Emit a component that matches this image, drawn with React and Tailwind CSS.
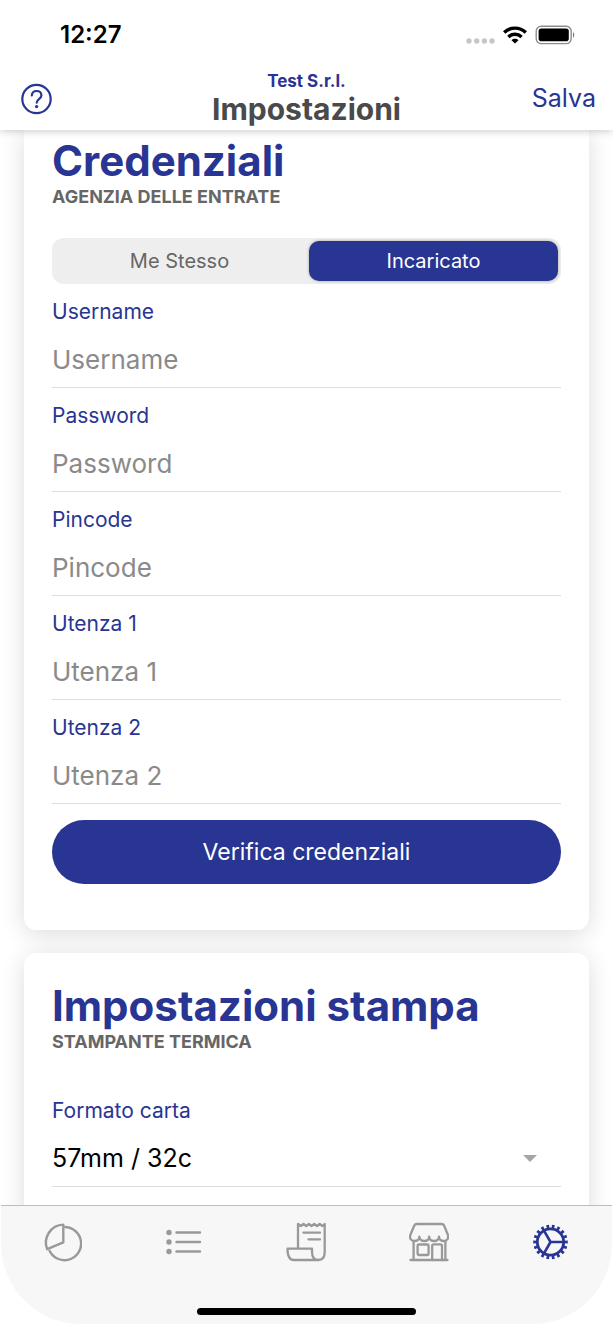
import React, { useState } from 'react';

const PieIcon = () => (
  <svg className="w-10 h-10" viewBox="0 0 40 40" fill="none" stroke="currentColor" strokeWidth={2.4} strokeLinejoin="round">
    <path d="M21.3 20.3V2.6A18 18 0 0 0 5.2 27.2z" />
    <path d="M22.3 5A16.6 16.6 0 1 1 7.2 28" />
  </svg>
);

const ListIcon = () => (
  <svg className="w-10 h-10" viewBox="0 0 40 40" fill="none" stroke="currentColor" strokeWidth={2.4} strokeLinecap="round">
    <path d="M12.5 10.5H36M12.500 20H36M12.500 29.500H36" />
    <g fill="currentColor" stroke="none">
      <circle cx="5" cy="10.500" r="2.700" />
      <circle cx="5" cy="20" r="2.700" />
      <circle cx="5" cy="29.500" r="2.700" />
    </g>
  </svg>
);

const ReceiptIcon = () => (
  <svg className="w-10 h-10" viewBox="0 0 40 40" fill="none" stroke="currentColor" strokeWidth={2.3} strokeLinecap="round" strokeLinejoin="round">
    <path d="M12 26V2l2.800 2 2.700-2 2.700 2 2.700-2 2.700 2 2.700-2 2.700 2 2.700-2 2.700 2 2.300-2V30c0 5-2.500 8-6.500 8" />
    <path d="M1.500 26.700H26V29.500c0 5.500 2.400 8.500 6.400 8.500H7.800C3.300 38 1.500 34.500 1.500 26.700z" />
    <path d="M17.500 10.700H34M22.500 17.400H34" />
  </svg>
);

const StoreIcon = () => (
  <svg className="w-10 h-10" viewBox="0 0 40 40" fill="none" stroke="currentColor" strokeWidth={2.3} strokeLinecap="round" strokeLinejoin="round">
    <path d="M8 2H32.500C34 2 34.700 2.600 35.200 3.700L39 13c.8 3.600-1.200 6-4.200 6-2.700 0-4.800-1.800-4.800-4.400 0 2.600-2 4.400-4.900 4.400s-4.900-1.800-4.900-4.400c0 2.600-2 4.400-4.900 4.400s-4.900-1.800-4.900-4.400C10.400 17.200 8.300 19 5.500 19 2.300 19 .3 16.600 1.300 13L5.200 3.700C5.700 2.600 6.500 2 8 2z" />
    <path d="M4.600 19V38M36.400 19V38M1.500 38H38.500" />
    <rect x="8.600" y="22.500" width="11" height="10.500" rx="1.200" />
    <path d="M23.200 38V24c0-1 .6-1.600 1.600-1.600h6.600c1 0 1.600.6 1.600 1.600V38" />
  </svg>
);

const GearIcon = () => (
  <svg className="w-10 h-10" viewBox="0 0 40 40" fill="none" stroke="currentColor">
    <circle cx="19.500" cy="20" r="13.200" strokeWidth={2.800} />
    <circle cx="19.500" cy="20" r="15.500" strokeWidth={3.600} pathLength="180" strokeDasharray="5 5" strokeDashoffset="2.500" />
    <path d="M19.500 20H32.500M19.500 20L13 8.700M19.500 20L13 31.300" strokeWidth={2.600} />
  </svg>
);

const tabs = [
  { name: 'Statistiche', Icon: PieIcon },
  { name: 'Elenco', Icon: ListIcon },
  { name: 'Scontrini', Icon: ReceiptIcon },
  { name: 'Negozio', Icon: StoreIcon },
  { name: 'Impostazioni', Icon: GearIcon },
];

const fields = [
  { id: 'username', label: 'Username', type: 'text' },
  { id: 'password', label: 'Password', type: 'password' },
  { id: 'pincode', label: 'Pincode', type: 'text' },
  { id: 'utenza1', label: 'Utenza 1', type: 'text' },
  { id: 'utenza2', label: 'Utenza 2', type: 'text' },
];

const StatusBar = () => (
  <div className="h-[70px] pl-[60px] pr-[38px] flex items-center justify-between text-black">
    <span className="text-2xl font-semibold">12:27</span>
    <div className="flex items-center gap-2">
      <svg className="w-[30px] h-5" viewBox="0 0 30 20" fill="#c6c6c6">
        <circle cx="4" cy="16" r="2.700" />
        <circle cx="11.700" cy="16" r="2.700" />
        <circle cx="19.400" cy="16" r="2.700" />
        <circle cx="27" cy="16" r="2.700" />
      </svg>
      <svg className="w-6 h-5" viewBox="0 0 24 20" fill="none" stroke="currentColor" strokeWidth={3.4}>
        <path d="M1.200 7.500C7.200 1.600 16.800 1.600 22.800 7.500" />
        <path d="M5.400 12C9.200 8.400 14.800 8.400 18.600 12" />
        <path d="M12 18.600L8.500 15.200C10.500 13.300 13.500 13.300 15.500 15.200z" fill="currentColor" stroke="none" />
      </svg>
      <svg className="w-10 h-5" viewBox="0 0 40 20">
        <rect x="1.200" y="1.200" width="35" height="17.400" rx="5" fill="none" stroke="#8e8e8e" strokeWidth={1.400} />
        <rect x="3.600" y="3.600" width="30.200" height="12.600" rx="2.800" fill="#000" />
        <path d="M38 7.300v5.400c1.700-.6 1.700-4.800 0-5.400z" fill="#777" />
      </svg>
    </div>
  </div>
);

const CardHeading = ({ title, subtitle }) => (
  <div className="mb-[33px]">
    <h2 className="text-[42px] leading-10 font-bold text-[#283593]">{title}</h2>
    <p className="mt-2 text-lg leading-4 font-bold text-[#666666] uppercase">{subtitle}</p>
  </div>
);

const App = () => {
  const [mode, setMode] = useState('Incaricato');

  return (
    <div className="h-screen flex flex-col bg-white overflow-hidden font-['Inter','Open_Sans',sans-serif]">
      <header className="relative z-10 shrink-0 bg-white shadow-[0_1px_8px_rgba(0,0,0,0.22)]">
        <StatusBar />
        <div className="h-[60px] px-[17px] pb-[2px] grid grid-cols-[1fr_auto_1fr] items-center text-[#283593]">
          <button aria-label="Aiuto" className="justify-self-start cursor-pointer">
            <svg className="w-10 h-8" viewBox="0 0 40 32" fill="none" stroke="currentColor" strokeWidth={2.2} strokeLinecap="round">
              <circle cx="19.500" cy="16" r="14.200" />
              <path d="M14.800 12.500C15 9.700 17 8 19.700 8s4.700 1.700 4.700 4.200c0 4-4.700 3.800-4.700 7.500" />
              <circle cx="19.600" cy="23.600" r="1.700" fill="currentColor" stroke="none" />
            </svg>
          </button>
          <div className="text-center">
            <p className="text-[17px] leading-5 font-bold">Test S.r.l.</p>
            <h1 className="text-[30px] leading-9 font-bold text-[#4a4a4a]">Impostazioni</h1>
          </div>
          <button className="justify-self-end text-[25px] cursor-pointer">Salva</button>
        </div>
      </header>

      <main className="flex-1 min-h-0 px-6 overflow-y-auto [scrollbar-width:none]">
        <section className="px-7 pt-[11px] pb-[46px] rounded-b-xl bg-white shadow-[0_4px_24px_rgba(0,0,0,0.14)]">
          <CardHeading title="Credenziali" subtitle="Agenzia delle entrate" />
          <div className="h-[46px] p-[3px] grid grid-cols-2 gap-[5px] rounded-xl bg-[#eeeeee]">
            {['Me Stesso', 'Incaricato'].map((option) => (
              <button
                key={option}
                aria-pressed={mode === option}
                onClick={() => setMode(option)}
                className={`rounded-[10px] text-xl cursor-pointer ${
                  mode === option
                    ? 'bg-[#283593] text-white shadow-[0_0_3px_rgba(0,0,0,0.35)]'
                    : 'text-[#666666]'
                }`}
              >
                {option}
              </button>
            ))}
          </div>

          <form onSubmit={(e) => e.preventDefault()}>
            {fields.map(({ id, label, type }) => (
              <div key={id} className="pt-4">
                <label htmlFor={id} className="block mb-2 text-[21px] leading-6 text-[#283593]">{label}</label>
                <input
                  id={id}
                  type={type}
                  placeholder={label}
                  className="block w-full h-14 border-b border-[#dedede] text-[26px] text-black placeholder:text-[#8a8a8a] outline-none"
                />
              </div>
            ))}
            <button className="mt-4 w-full h-16 rounded-full bg-[#283593] text-[23px] text-white cursor-pointer">
              Verifica credenziali
            </button>
          </form>
        </section>

        <section className="relative mt-[23px] px-7 pt-[33px] pb-12 rounded-xl bg-white shadow-[0_4px_24px_rgba(0,0,0,0.14)]">
          <CardHeading title="Impostazioni stampa" subtitle="Stampante termica" />
          <div className="pt-4">
            <label htmlFor="formato" className="block mb-2 text-[21px] leading-6 text-[#283593]">Formato carta</label>
            <div className="relative">
              <select
                id="formato"
                className="block w-full h-14 border-b border-[#dedede] appearance-none bg-white text-[25px] text-black outline-none"
              >
                <option>57mm / 32c</option>
                <option>80mm / 48c</option>
              </select>
              <svg className="absolute right-6 top-6 w-[14px] h-[7px] pointer-events-none" viewBox="0 0 14 7" fill="#a6a6a6">
                <path d="M0 0H14L7 7z" />
              </svg>
            </div>
          </div>
        </section>
      </main>

      <nav className="relative z-10 shrink-0 h-[122px] px-px pb-[3px] bg-white">
        <div className="h-full pt-4 pb-[9px] flex flex-col items-center justify-between border-t border-[#bdbdbd] rounded-b-[80px] bg-[#f7f7f7]">
          <div className="w-full grid grid-cols-5">
            {tabs.map(({ name, Icon }) => (
              <a
                key={name}
                href="#"
                aria-label={name}
                className={`flex justify-center ${name === 'Impostazioni' ? 'text-[#283593]' : 'text-[#999999]'}`}
              >
                <Icon />
              </a>
            ))}
          </div>
          <div className="w-[219px] h-[7px] rounded-full bg-black"></div>
        </div>
      </nav>
    </div>
  );
};

export default App;
